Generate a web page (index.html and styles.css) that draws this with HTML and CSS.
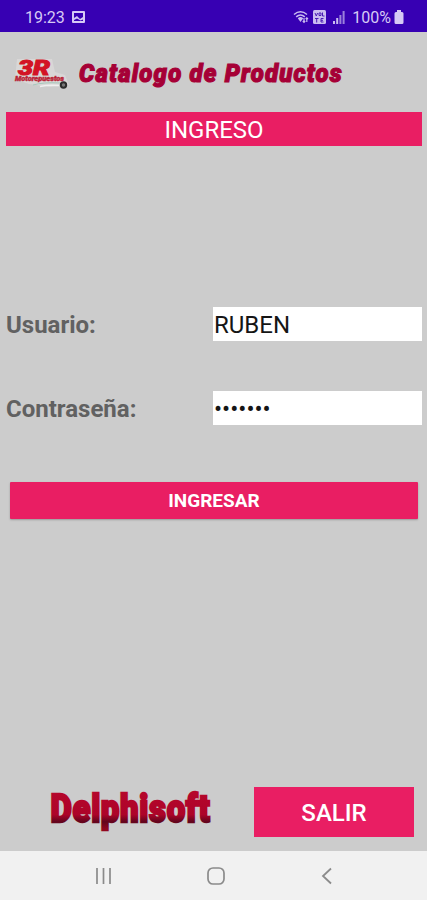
FILE: index.html
```html
<!DOCTYPE html>
<html lang="es">
<head>
<meta charset="UTF-8" />
<meta name="viewport" content="width=device-width, initial-scale=1" />
<title>Catalogo de Productos</title>
<link rel="stylesheet" href="styles.css">
</head>
<body>
<div class="status-bar">
  <span class="clock">19:23</span>
  <svg class="picture-icon" width="13" height="12" viewBox="0 0 13 12">
    <path fill="#d6caf5" fill-rule="evenodd" d="M1 0h11q1 0 1 1v10q0 1-1 1H1q-1 0-1-1V1q0-1 1-1zM2 2v5l3-2 3 3 3-2V2zM2 10h9V8.500L8.500 9.500 5 7.500 2 9z"/>
  </svg>
  <div class="status-right">
    <svg width="16" height="14" viewBox="0 0 16 14" fill="none" stroke="#cabcf0">
      <path stroke-width="1.500" d="M1 4.500Q7.500-.8 14 4.500M3.200 6.800Q7.500 3.200 11.800 6.800"/>
      <path fill="#cabcf0" stroke="none" d="M4.800 8.200Q7.500 6 10.200 8.200L7.500 12z"/>
      <path stroke-width="1.200" d="M11 8v4M9.800 11l1.200 1.300 1.200-1.300M13.800 12V8M12.700 9l1.100-1.200L15 9"/>
    </svg>
    <svg class="volte" width="13" height="14" viewBox="0 0 13 14">
      <rect width="13" height="14" rx="1.500" fill="#cabcf0"/>
      <path fill="none" stroke="#4a1cb5" d="M2 3l1.300 3L4.600 3M6 3h2v2.500H6zM9.500 2.500v3.500h2M2 8.500h3.500M3.700 8.500v4M10.500 8.500H8v3.500h2.500M8 10.300h2"/>
    </svg>
    <svg class="signal" width="12" height="13" viewBox="0 0 12 13">
      <path fill="#cabcf0" d="M0 10h2v3H0zM3.200 7h2v6h-2z"/>
      <path fill="#9b80dc" d="M6.400 4h2v9h-2zM9.600 0h2v13h-2z"/>
    </svg>
    <span class="battery-text">100%</span>
    <svg width="10" height="14" viewBox="0 0 10 14">
      <path fill="#d6caf5" d="M3 0h4v2h1q1.500 0 1.500 1.500v9Q9.500 14 8 14H2Q.5 14 .5 12.500v-9Q.5 2 2 2h1z"/>
    </svg>
  </div>
</div>

<main class="screen">
  <header class="header">
    <svg class="logo" width="58" height="34" viewBox="0 0 58 34">
      <path d="M4 2h35l3 13 10 3 4 10-18 2-22-3-14-5z" fill="#d9d7d7"/>
      <text class="logo-main" x="5" y="18" textLength="32" lengthAdjust="spacingAndGlyphs">3R</text>
      <text class="logo-sub" x="2" y="24" textLength="49" lengthAdjust="spacingAndGlyphs">Motorepuestos</text>
      <path d="M20 28q10-3 27-2" fill="none" stroke="#a5c8bb"/>
      <path d="M27 29.500q9-2 19-1" fill="none" stroke="#efefef" stroke-width="1.500"/>
      <circle cx="50.500" cy="28" r="2.700" fill="#777" stroke="#2c2c2c" stroke-width="2"/>
    </svg>
    <svg class="title" width="276" height="38" viewBox="0 0 276 38">
      <text class="title-text" x="2" y="26.500" textLength="264" lengthAdjust="spacingAndGlyphs">Catalogo de Productos</text>
    </svg>
  </header>

  <h2 class="banner">INGRESO</h2>

  <form class="login">
    <div class="row">
      <label for="usuario">Usuario:</label>
      <input class="field" id="usuario" type="text" value="RUBEN">
    </div>
    <div class="row">
      <label for="clave">Contraseña:</label>
      <div class="field password" id="clave">•••••••</div>
    </div>
    <button class="btn-login" type="button">INGRESAR</button>
  </form>

  <footer class="footer">
    <svg class="brand" width="172" height="50" viewBox="0 0 172 50">
      <defs>
        <linearGradient id="rojo" gradientUnits="userSpaceOnUse" x1="0" y1="6" x2="0" y2="42">
          <stop offset="0" stop-color="#b5062b"/>
          <stop offset=".6" stop-color="#ad0429"/>
          <stop offset=".8" stop-color="#62051d"/>
          <stop offset="1" stop-color="#91061f"/>
        </linearGradient>
      </defs>
      <text class="brand-text" x="4.500" y="35" textLength="160" lengthAdjust="spacingAndGlyphs">Delphisoft</text>
    </svg>
    <button class="btn-exit" type="button">SALIR</button>
  </footer>
</main>

<nav class="nav-bar">
  <svg width="18" height="18" viewBox="0 0 18 18" stroke="#8b8b8b" stroke-width="1.700">
    <path d="M2 1v16M8.500 1v16M15 1v16"/>
  </svg>
  <svg width="18" height="18" viewBox="0 0 18 18" fill="none" stroke="#8b8b8b" stroke-width="1.700">
    <rect x="1" y="1" width="16" height="16" rx="5"/>
  </svg>
  <svg width="18" height="18" viewBox="0 0 18 18" fill="none" stroke="#8b8b8b" stroke-width="1.800">
    <path d="M13 1.500L5 9l8 7.500"/>
  </svg>
</nav>
</body>
</html>
```

FILE: styles.css
```css
* {
  box-sizing: border-box;
}
body {
  display: flex;
  flex-direction: column;
  height: 900px;
  margin: 0;
  background: #ccc;
  font-family: Roboto, sans-serif;
  overflow: hidden;
}
svg {
  display: block;
  flex: none;
  overflow: visible;
}
.status-bar {
  display: flex;
  align-items: center;
  height: 32px;
  padding: 2px 23px 0 25px;
  background: #3700b3;
  color: #d6caf5;
  font-size: 16px;
}
.picture-icon {
  margin-left: 7px;
}
.status-right {
  display: flex;
  align-items: center;
  margin-left: auto;
}
.volte {
  margin-left: 4px;
}
.signal {
  margin-left: 7px;
}
.battery-text {
  margin: 0 3px 0 7px;
}
.screen {
  display: flex;
  flex-direction: column;
  height: 819px;
}
.header {
  display: flex;
  align-items: center;
  height: 80px;
  padding: 3px 0 0 13px;
}
.title {
  margin-left: 6px;
}
.logo-main {
  font: italic 900 21px Roboto, sans-serif;
  fill: #d31325;
  stroke: #d31325;
  stroke-width: 1px;
}
.logo-sub {
  font: italic 900 7px Roboto, sans-serif;
  fill: #b92336;
  stroke: #b92336;
  stroke-width: 0.4px;
}
.title-text {
  font: italic 900 26px Roboto, sans-serif;
  letter-spacing: 1.3px;
  fill: #a60036;
  stroke: #a60036;
  stroke-width: 1.2px;
}
.banner {
  height: 34px;
  margin: 0 5px 0 6px;
  background: #e91e63;
  color: #fff;
  font-size: 24px;
  font-weight: 400;
  line-height: 36px;
  text-align: center;
}
.login {
  display: flex;
  flex-direction: column;
  padding-top: 161px;
}
.row {
  display: flex;
  align-items: center;
  justify-content: space-between;
  height: 34px;
  margin: 0 5px 50px 6px;
}
.row label {
  padding-top: 2px;
  color: #616161;
  font-size: 24px;
  font-weight: 700;
}
.field {
  width: 209px;
  height: 34px;
  padding: 2px 0 0 1px;
  border: 0;
  background: #fff;
  color: #151515;
  font-family: Roboto, sans-serif;
  font-size: 24px;
}
.password {
  font-size: 24px;
  line-height: 32px;
}
.btn-login {
  height: 37px;
  margin: 7px 9px 0 10px;
  padding: 0;
  border: 0;
  border-radius: 1px;
  background: #e91e63;
  box-shadow: 0 1px 2px #999;
  color: #fff;
  font: 700 19px Roboto, sans-serif;
}
.footer {
  display: flex;
  align-items: center;
  justify-content: space-between;
  margin-top: auto;
  padding: 0 13px 14px 46px;
}
.brand-text {
  font: 900 39px Roboto, sans-serif;
  letter-spacing: 0.8px;
  fill: url(#rojo);
  stroke: url(#rojo);
  stroke-width: 2.4px;
}
.btn-exit {
  width: 160px;
  height: 50px;
  padding: 2px 0 0;
  border: 0;
  background: #e91e63;
  color: #fff;
  font: 500 24px Roboto, sans-serif;
}
.nav-bar {
  display: flex;
  align-items: center;
  justify-content: space-between;
  height: 49px;
  padding: 0 91px 0 95px;
  background: #f1f1f1;
}
```
